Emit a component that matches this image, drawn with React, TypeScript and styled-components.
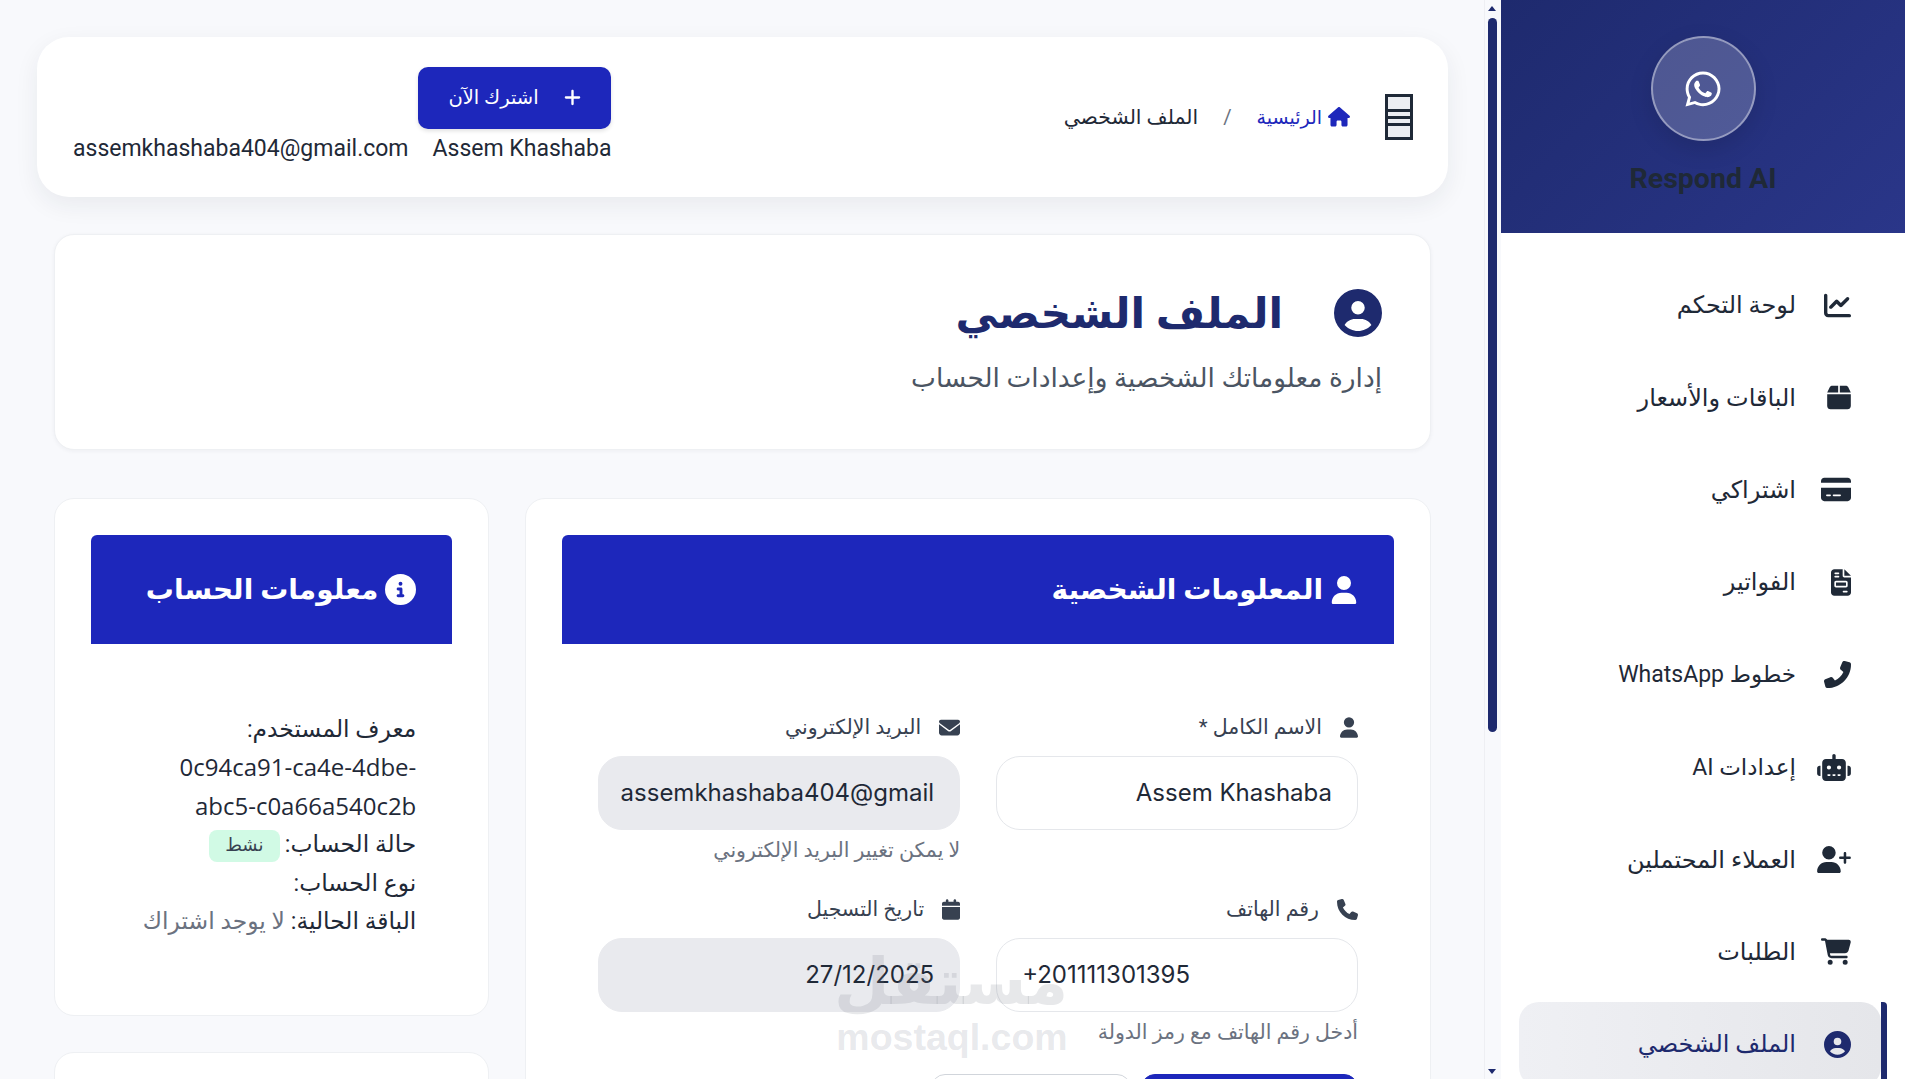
import React from 'react';
import styled, { createGlobalStyle } from 'styled-components';
import {
  FaBox,
  FaCalendar,
  FaCartShopping,
  FaChartLine,
  FaCircleInfo,
  FaCircleUser,
  FaCreditCard,
  FaEnvelope,
  FaFileInvoice,
  FaHouse,
  FaPhone,
  FaPlus,
  FaRobot,
  FaUser,
  FaUserPlus,
  FaWhatsapp,
} from 'react-icons/fa6';

const GlobalStyle = createGlobalStyle`
  html, body {
    margin: 0;
    height: 100%;
    overflow: hidden;
    background: #f8f9fc;
  }
  * {
    box-sizing: border-box;
  }
  body {
    font-family: Roboto, "DejaVu Sans", sans-serif;
    color: #1f2937;
  }
`;

const Shell = styled.div`
  width: 1905px;
  height: 1079px;
  display: flex;
  direction: ltr;
  overflow: hidden;
`;
const Main = styled.div`
  width: 1485px;
  height: 1079px;
  direction: rtl;
  overflow: hidden;
  padding: 37px 37px 0 37px;
  background: #f8f9fc;
  flex-shrink: 0;
  position: relative;
`;
const Scrollbar = styled.div`
  width: 17px;
  height: 1079px;
  margin-left: -1px;
  background: #f8f9fc;
  border-left: 1px solid #eeeff3;
  position: relative;
  flex-shrink: 0;
`;
const Thumb = styled.div`
  position: absolute;
  top: 18px;
  left: 3px;
  width: 9px;
  height: 714px;
  border-radius: 5px;
  background: #1e2a6e;
`;
const Arrow = styled.div<{ $down?: boolean }>`
  position: absolute;
  left: 3px;
  ${(p) => (p.$down ? 'bottom: 5px;' : 'top: 6px;')}
  width: 0;
  height: 0;
  border-left: 4px solid transparent;
  border-right: 4px solid transparent;
  ${(p) => (p.$down ? 'border-top: 5px solid #1e2a6e;' : 'border-bottom: 5px solid #1e2a6e;')}
`;
const Sidebar = styled.aside`
  width: 404px;
  height: 1079px;
  direction: rtl;
  background: #fff;
  flex-shrink: 0;
`;
const Brand = styled.div`
  height: 233px;
  padding-top: 36px;
  background: linear-gradient(135deg, #1e2a6e 0%, #2a3689 100%);
  display: flex;
  flex-direction: column;
  align-items: center;
`;
const BrandCircle = styled.div`
  width: 105px;
  height: 105px;
  border-radius: 50%;
  background: rgba(255, 255, 255, 0.2);
  border: 2px solid rgba(255, 255, 255, 0.4);
  color: #fff;
  display: flex;
  align-items: center;
  justify-content: center;
  font-size: 40px;
  box-shadow: 0 8px 24px rgba(0, 0, 0, 0.12);
`;
const BrandName = styled.div`
  margin-top: 20px;
  font-size: 28.5px;
  line-height: 36px;
  font-weight: 700;
  color: #1f2937;
  direction: ltr;
`;
const Nav = styled.nav`
  padding: 26px 18px 0 18px;
  display: flex;
  flex-direction: column;
`;
const NavItem = styled.div<{ $active?: boolean; $compact?: boolean }>`
  position: relative;
  height: ${(p) => (p.$active ? '84.4px' : '92.4px')};
  margin: ${(p) => (p.$active ? '4px 6px 4px 0' : '0')};
  display: flex;
  align-items: center;
  padding-right: ${(p) => (p.$active ? '30px' : '36px')};
  font-size: ${(p) => (p.$compact ? '23px' : '24px')};
  color: ${(p) => (p.$active ? '#1e2a6e' : '#1f2937')};
  border-radius: 20px;
  background: ${(p) => (p.$active ? 'linear-gradient(90deg, #eff0f4, #e5e6ea)' : 'transparent')};

  ${(p) =>
    p.$active &&
    `&::after {
      content: '';
      position: absolute;
      top: 0;
      bottom: 0;
      right: -6px;
      width: 6px;
      background: #1e2a6e;
      border-radius: 0 4px 0 0;
    }`}
`;
const NavIcon = styled.span<{ $w: number }>`
  width: 55px;
  flex-shrink: 0;
  display: flex;
  justify-content: flex-start;

  svg {
    height: 27px;
    width: ${(p) => p.$w}px;
  }
`;
const MirroredPhone = styled(FaPhone)`
  transform: scaleX(-1);
`;
const Topbar = styled.header`
  width: 1411px;
  height: 160px;
  background: #fff;
  border-radius: 32px;
  box-shadow: 0 8px 24px rgba(31, 41, 55, 0.07);
  display: flex;
  justify-content: space-between;
  align-items: center;
  padding: 0 35px 2px 36px;
`;
const TopRight = styled.div`
  display: flex;
  align-items: center;
  gap: 35px;
  margin-bottom: -2px;
`;
const Burger = styled.div`
  width: 28px;
  height: 46px;
  border: 3px solid #1f2937;
  background: #eceef2;
  display: flex;
  flex-direction: column;
  justify-content: center;
  gap: 4px;
`;
const BurgerLine = styled.span`
  height: 3px;
  background: #1f2937;
`;
const Crumbs = styled.div`
  display: flex;
  align-items: center;
  font-size: 20.4px;
`;
const CrumbHome = styled.span`
  display: flex;
  align-items: center;
  gap: 6px;
  color: #1d27bb;
  font-size: 19px;

  svg {
    height: 19.5px;
    width: 22px;
  }
`;
const CrumbSep = styled.span`
  margin: 0 25px;
  color: #6b7280;
`;
const TopLeft = styled.div`
  display: flex;
  flex-direction: column;
  align-items: flex-start;
  gap: 3px;
`;
const SubscribeButton = styled.button`
  width: 193px;
  height: 62px;
  background: #1d27bb;
  color: #fff;
  border: 0;
  border-radius: 10px;
  font: inherit;
  font-size: 19.5px;
  display: flex;
  align-items: center;
  justify-content: center;
  gap: 24px;
  box-shadow: 0 2px 4px rgba(0, 0, 0, 0.12);
`;
const UserRow = styled.div`
  display: flex;
  gap: 24px;
  font-size: 23px;
  color: #1f2937;
  line-height: 34px;
`;
const HeroCard = styled.section`
  margin: 37px 17px 0;
  height: 216px;
  background: #fff;
  border: 1px solid #eef0f3;
  border-radius: 20px;
  box-shadow: 0 1px 4px rgba(31, 41, 55, 0.05);
  padding: 52px 48px 0;
`;
const HeroTitle = styled.h1`
  margin: 0;
  display: flex;
  align-items: center;
  gap: 51px;
  font-size: 42.6px;
  line-height: 52px;
  font-weight: 700;
  color: #1e2a6e;
`;
const HeroSub = styled.p`
  margin: 21px 0 0;
  font-size: 26.4px;
  line-height: 36px;
  color: #4b5563;
`;
const Columns = styled.div`
  margin: 48px 17px 0;
  display: flex;
  gap: 36px;
  align-items: flex-start;
`;
const FormCard = styled.section`
  width: 907px;
  height: 700px;
  background: #fff;
  border: 1px solid #eef0f3;
  border-radius: 20px;
  padding: 36px;
`;
const SideColumn = styled.div`
  width: 436px;
  display: flex;
  flex-direction: column;
  gap: 36px;
`;
const InfoCard = styled.section<{ $stub?: boolean }>`
  background: #fff;
  border: 1px solid #eef0f3;
  border-radius: 20px;
  padding: 36px;
  height: ${(p) => (p.$stub ? '200px' : '518px')};
`;
const CardHeader = styled.div`
  height: 109px;
  background: #1d27bb;
  color: #fff;
  border-radius: 6px 6px 0 0;
  padding: 0 36px;
  display: flex;
  align-items: center;
  gap: 7px;
  font-size: 28px;
  font-weight: 700;
`;
const FormGrid = styled.div`
  margin-top: 70px;
  display: grid;
  grid-template-columns: minmax(0, 1fr) minmax(0, 1fr);
  grid-template-rows: 182px 178px;
  column-gap: 36px;
  padding: 0 36px;
`;
const Label = styled.label<{ $iconWidth: number }>`
  display: flex;
  align-items: center;
  gap: 18px;
  height: 26px;
  margin-bottom: 16px;
  font-size: 20.5px;
  color: #374151;

  svg {
    height: 21px;
    width: ${(p) => p.$iconWidth}px;
    flex-shrink: 0;
  }
`;
const Input = styled.div<{ $disabled?: boolean; $ltr?: boolean }>`
  height: 74px;
  border-radius: 24px;
  border: 1px solid ${(p) => (p.$disabled ? '#e9eaee' : '#e5e7eb')};
  background: ${(p) => (p.$disabled ? '#e9eaee' : '#fff')};
  display: flex;
  align-items: center;
  padding: 0 25px 2px;
  font-family: Inter, sans-serif;
  font-size: 24px;
  color: #1f2937;
  overflow: hidden;
  white-space: nowrap;
  direction: ${(p) => (p.$ltr ? 'ltr' : 'rtl')};
`;
const Hint = styled.div`
  margin-top: 7px;
  font-size: 20.5px;
  line-height: 26px;
  color: #6b7280;
`;
const InfoBody = styled.div`
  margin-top: 66px;
  padding: 0 36px;
  font-size: 23.4px;
  line-height: 38.4px;
`;
const InfoLine = styled.div`
  color: #1f2937;
  height: 38.4px;
`;
const UidLine = styled(InfoLine)`
  direction: ltr;
  text-align: right;
  font-family: "Open Sans", sans-serif;
  font-size: 24px;
`;
const Muted = styled.span`
  color: #6b7280;
`;
const Badge = styled.span`
  display: inline-block;
  margin-right: 5px;
  width: 71px;
  height: 32px;
  line-height: 30px;
  text-align: center;
  border-radius: 8px;
  background: #d1fae5;
  color: #374151;
  font-size: 18px;
  vertical-align: middle;
`;
const Actions = styled.div`
  display: flex;
  gap: 10px;
  padding: 0 36px;
`;
const ActionButton = styled.div<{ $primary?: boolean }>`
  width: ${(p) => (p.$primary ? '217px' : '200px')};
  height: 60px;
  border-radius: 14px;
  background: ${(p) => (p.$primary ? '#1d27bb' : '#fff')};
  border: 1px solid ${(p) => (p.$primary ? '#1d27bb' : '#d1d5db')};
`;
const Watermark = styled.div`
  position: absolute;
  left: 836px;
  top: 950px;
  width: 232px;
  text-align: center;
  color: rgba(120, 125, 140, 0.18);
  font-weight: 700;
  pointer-events: none;
`;
const WatermarkArabic = styled.div`
  font-size: 64px;
  line-height: 66px;
`;
const WatermarkLatin = styled.div`
  margin-top: 2px;
  font-family: "Liberation Sans", sans-serif;
  font-size: 37.5px;
  line-height: 38px;
  direction: ltr;
`;

const nav = [
  { label: 'لوحة التحكم', icon: <FaChartLine />, w: 27 },
  { label: 'الباقات والأسعار', icon: <FaBox />, w: 24 },
  { label: 'اشتراكي', icon: <FaCreditCard />, w: 30 },
  { label: 'الفواتير', icon: <FaFileInvoice />, w: 20 },
  { label: 'خطوط WhatsApp', icon: <MirroredPhone />, w: 27, compact: true },
  { label: 'إعدادات AI', icon: <FaRobot />, w: 34, compact: true },
  { label: 'العملاء المحتملين', icon: <FaUserPlus />, w: 34 },
  { label: 'الطلبات', icon: <FaCartShopping />, w: 30 },
  { label: 'الملف الشخصي', icon: <FaCircleUser />, w: 27, active: true },
];

const App = () => (
  <Shell>
    <GlobalStyle />
    <Main>
      <Topbar>
        <TopRight>
          <Burger>
            <BurgerLine />
            <BurgerLine />
            <BurgerLine />
          </Burger>
          <Crumbs>
            <CrumbHome>
              <FaHouse />
              الرئيسية
            </CrumbHome>
            <CrumbSep>/</CrumbSep>
            الملف الشخصي
          </Crumbs>
        </TopRight>
        <TopLeft>
          <SubscribeButton>
            <FaPlus size={19} />
            اشترك الآن
          </SubscribeButton>
          <UserRow>
            <span>Assem Khashaba</span>
            <span>assemkhashaba404@gmail.com</span>
          </UserRow>
        </TopLeft>
      </Topbar>
      <HeroCard>
        <HeroTitle>
          <FaCircleUser size={48} />
          الملف الشخصي
        </HeroTitle>
        <HeroSub>إدارة معلوماتك الشخصية وإعدادات الحساب</HeroSub>
      </HeroCard>
      <Columns>
        <FormCard>
          <CardHeader>
            <FaUser size={28} />
            المعلومات الشخصية
          </CardHeader>
          <FormGrid>
            <div>
              <Label $iconWidth={18}>
                <FaUser />
                الاسم الكامل *
              </Label>
              <Input>Assem Khashaba</Input>
            </div>
            <div>
              <Label $iconWidth={21}>
                <FaEnvelope />
                البريد الإلكتروني
              </Label>
              <Input $disabled>assemkhashaba404@gmail</Input>
              <Hint>لا يمكن تغيير البريد الإلكتروني</Hint>
            </div>
            <div>
              <Label $iconWidth={21}>
                <FaPhone />
                رقم الهاتف
              </Label>
              <Input $ltr>+201111301395</Input>
              <Hint>أدخل رقم الهاتف مع رمز الدولة</Hint>
            </div>
            <div>
              <Label $iconWidth={18}>
                <FaCalendar />
                تاريخ التسجيل
              </Label>
              <Input $disabled>27/12/2025</Input>
            </div>
          </FormGrid>
          <Actions>
            <ActionButton $primary />
            <ActionButton />
          </Actions>
        </FormCard>
        <SideColumn>
          <InfoCard>
            <CardHeader>
              <FaCircleInfo size={31} />
              معلومات الحساب
            </CardHeader>
            <InfoBody>
              <InfoLine>معرف المستخدم:</InfoLine>
              <UidLine>0c94ca91-ca4e-4dbe-</UidLine>
              <UidLine>abc5-c0a66a540c2b</UidLine>
              <InfoLine>
                حالة الحساب:
                <Badge>نشط</Badge>
              </InfoLine>
              <InfoLine>نوع الحساب:</InfoLine>
              <InfoLine>
                الباقة الحالية: <Muted>لا يوجد اشتراك</Muted>
              </InfoLine>
            </InfoBody>
          </InfoCard>
          <InfoCard $stub />
        </SideColumn>
      </Columns>
      <Watermark>
        <WatermarkArabic>مستقل</WatermarkArabic>
        <WatermarkLatin>mostaql.com</WatermarkLatin>
      </Watermark>
    </Main>
    <Scrollbar>
      <Arrow />
      <Thumb />
      <Arrow $down />
    </Scrollbar>
    <Sidebar>
      <Brand>
        <BrandCircle>
          <FaWhatsapp />
        </BrandCircle>
        <BrandName>Respond AI</BrandName>
      </Brand>
      <Nav>
        {nav.map((item) => (
          <NavItem key={item.label} $active={item.active} $compact={item.compact}>
            <NavIcon $w={item.w}>{item.icon}</NavIcon>
            {item.label}
          </NavItem>
        ))}
      </Nav>
    </Sidebar>
  </Shell>
);

export default App;
